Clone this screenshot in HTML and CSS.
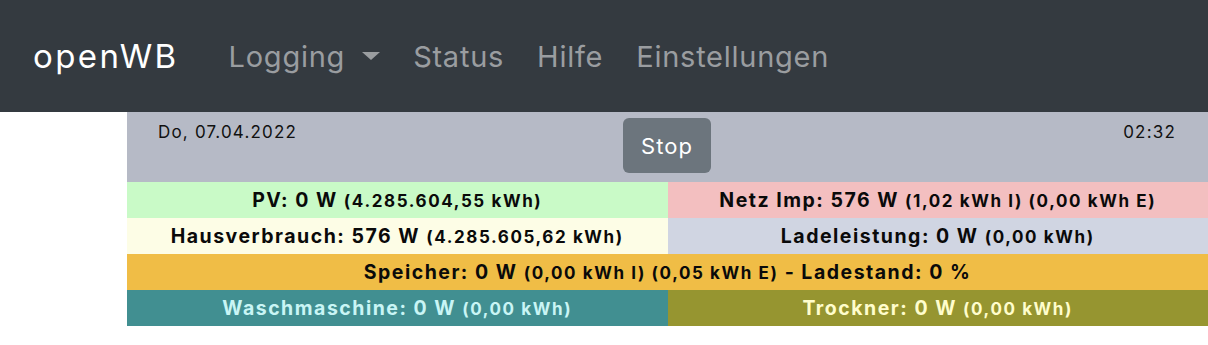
FILE: index.html
```html
<!DOCTYPE html>
<html lang="de">
<head>
    <meta charset="UTF-8">
    <meta name="viewport" content="width=device-width, initial-scale=1.0">
    <title>openWB</title>
    <link rel="stylesheet" href="styles.css">
</head>
<body>

    <div class="navbar">
        <a href="#" class="brand">openWB</a>
        <a href="#" class="nav-link dropdown">Logging<span class="caret"></span></a>
        <a href="#" class="nav-link">Status</a>
        <a href="#" class="nav-link">Hilfe</a>
        <a href="#" class="nav-link">Einstellungen</a>
    </div>

    <div class="content">
        <div class="topbar">
            <span class="date">Do, 07.04.2022</span>
            <button class="stop-btn">Stop</button>
            <span class="time">02:32</span>
        </div>

        <div class="values">
            <div class="cell pv">PV: 0 W <small>(4.285.604,55 kWh)</small></div>
            <div class="cell netz">Netz Imp: 576 W <small>(1,02 kWh I) (0,00 kWh E)</small></div>
            <div class="cell haus">Hausverbrauch: 576 W <small>(4.285.605,62 kWh)</small></div>
            <div class="cell lade">Ladeleistung: 0 W <small>(0,00 kWh)</small></div>
            <div class="cell speicher">Speicher: 0 W <small>(0,00 kWh I) (0,05 kWh E)</small> - Ladestand: 0 %</div>
            <div class="cell wasch">Waschmaschine: 0 W <small>(0,00 kWh)</small></div>
            <div class="cell trockner">Trockner: 0 W <small>(0,00 kWh)</small></div>
        </div>
    </div>

</body>
</html>
```

FILE: styles.css
```css
body {
    font-family: Inter, "Liberation Sans", Arial, sans-serif;
    margin: 0;
    padding: 0;
    background-color: white;
}

.navbar {
    background-color: #343a40;
    display: flex;
    align-items: center;
    height: 112px;
    padding: 0 33px;
}

.navbar a {
    text-decoration: none;
}

.brand {
    color: white;
    font-size: 33px;
    letter-spacing: 2.4px;
    margin-right: 50px;
}

.nav-link {
    color: #9a9da0;
    font-size: 29px;
    letter-spacing: 0.75px;
    margin-right: 33px;
}

.caret {
    display: inline-block;
    width: 0;
    height: 0;
    margin-left: 17px;
    vertical-align: 7px;
    border-top: 8px solid #9a9da0;
    border-left: 9px solid transparent;
    border-right: 9px solid transparent;
}

.content {
    margin-left: 127px;
}

.topbar {
    background-color: #b6bac6;
    height: 70px;
    display: grid;
    grid-template-columns: 1fr auto 1fr;
    align-items: start;
    padding: 0 32px 0 31px;
    color: #111;
    font-size: 17px;
    letter-spacing: 1.2px;
}

.date,
.time {
    margin-top: 10px;
}

.time {
    justify-self: end;
}

.stop-btn {
    margin-top: 6px;
    background-color: #6c757d;
    color: white;
    border: none;
    border-radius: 6px;
    font-family: inherit;
    font-size: 22px;
    letter-spacing: 1px;
    width: 88px;
    height: 55px;
}

.values {
    display: grid;
    grid-template-columns: 1fr 1fr;
}

.cell {
    height: 36px;
    line-height: 36px;
    text-align: center;
    font-weight: bold;
    font-size: 19.5px;
    letter-spacing: 1.5px;
    color: #0a0a0a;
}

.cell small {
    font-size: 17px;
    letter-spacing: 1.6px;
}

.pv { background-color: #c9fac7; }
.netz { background-color: #f3bfc0; }
.haus { background-color: #fdfde6; }
.lade { background-color: #d0d5e2; }

.speicher {
    grid-column: span 2;
    background-color: #f0bd46;
}

.wasch {
    background-color: #418f91;
    color: #c9f5f5;
}

.trockner {
    background-color: #969530;
    color: #fffdcc;
}
```
